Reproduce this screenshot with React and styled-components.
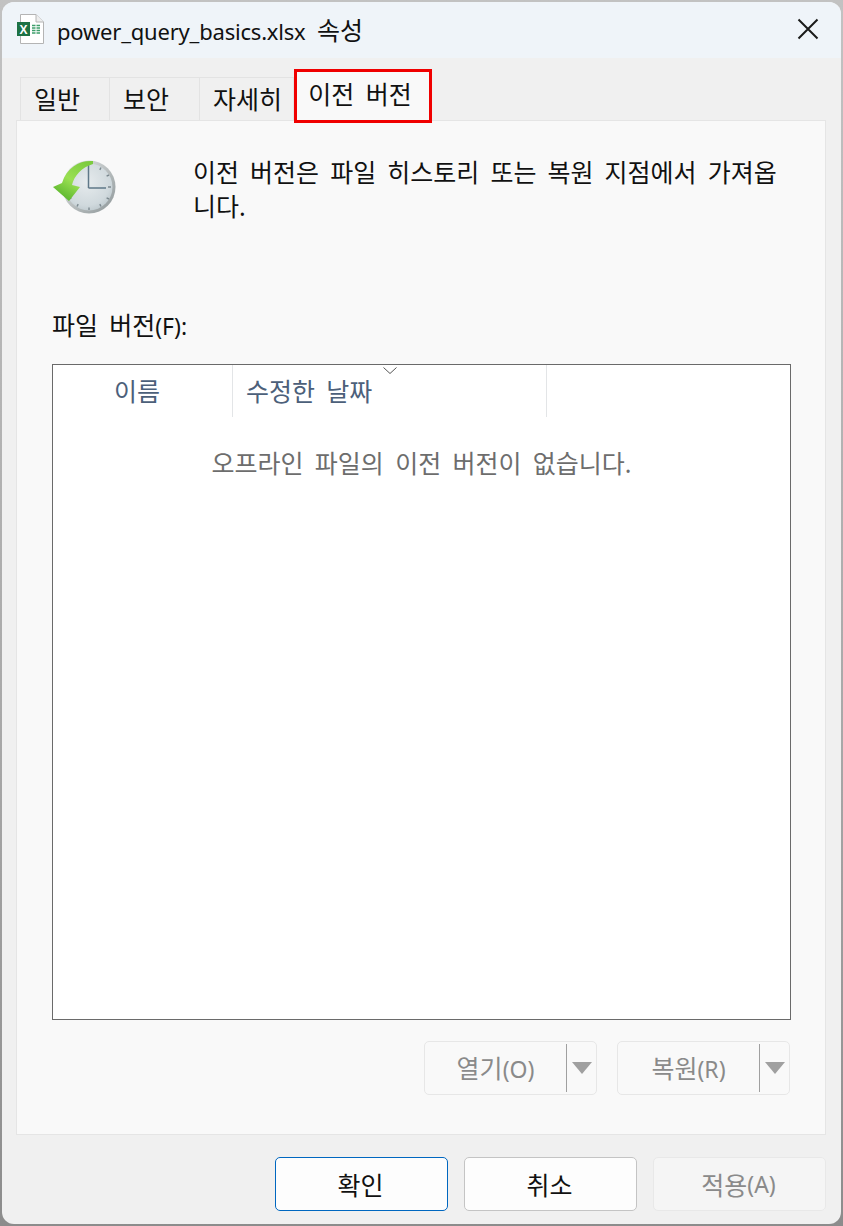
import React from "react";
import styled, { createGlobalStyle } from "styled-components";

const Global = createGlobalStyle`
  html, body { margin: 0; padding: 0; }
  body {
    width: 843px; height: 1226px; overflow: hidden;
    background: linear-gradient(180deg, #c2c2c2 0%, #a8a8a8 60%, #8c8c8c 100%);
    font-family: "Noto Sans", "Noto Sans CJK KR", sans-serif;
  }
  * { box-sizing: border-box; }
`;

const FONT = `"Noto Sans", "Noto Sans CJK KR", sans-serif`;

const Window = styled.div`
  margin: 2px;
  width: 839px;
  height: 1222px;
  border-radius: 12px;
  overflow: hidden;
  background: #f0f0f0;
  display: flex;
  flex-direction: column;
  font-family: ${FONT};
`;
const TitleBar = styled.header`
  height: 56px;
  flex: none;
  background: #eff4f9;
  display: flex;
  align-items: center;
  padding: 0 22px 2px 14px;
`;
const TitleText = styled.div`
  margin-left: 9px;
  font-size: 22px;
  letter-spacing: -0.2px;
  color: #111;
  flex: 1;
  word-spacing: 6px;
`;
const TitleKorean = styled.span`
  font-size: 25px;
  letter-spacing: 0;
`;
const Latin = styled.span`
  font-size: 23px;
`;
const Content = styled.div`
  flex: 1;
  display: flex;
  flex-direction: column;
  padding: 12px 14px 0;
`;
const TabStrip = styled.div`
  height: 53px;
  flex: none;
  display: flex;
  align-items: flex-end;
  padding-left: 4px;
  position: relative;
  z-index: 1;
  margin-bottom: -3px;
`;
const Tab = styled.div`
  width: ${p => p.$w}px;
  height: 43px;
  margin-bottom: 3px;
  background: #f0f0f0;
  border: 1px solid #e3e3e3;
  border-bottom: none;
  border-left-width: ${p => (p.$first ? 1 : 0)}px;
  font-size: 25px;
  color: #111;
  display: flex;
  align-items: center;
  padding-left: 13px;
  padding-bottom: 2px;
`;
const ActiveTab = styled.div`
  width: 138px;
  height: 54px;
  background: #f9f9f9;
  border: 3px solid #f00000;
  font-size: 25px;
  color: #111;
  display: flex;
  align-items: center;
  justify-content: center;
  word-spacing: 5px;
  padding: 0 6px 6px 0;
`;
const Panel = styled.section`
  width: 810px;
  height: 1015px;
  flex: none;
  background: #f9f9f9;
  border: 1px solid #e5e5e5;
  padding: 37px 34px 0 35px;
  display: flex;
  flex-direction: column;
`;
const Intro = styled.div`
  display: flex;
  height: 128px;
  flex: none;
`;
const IntroIcon = styled.div`
  width: 141px;
  flex: none;
`;
const IntroText = styled.p`
  margin: -3px 0 0;
  font-size: 25px;
  line-height: 34px;
  color: #111;
  word-spacing: 4.6px;
  width: 595px;
`;
const FieldLabel = styled.div`
  margin-top: 22px;
  font-size: 25px;
  line-height: 34px;
  color: #111;
  height: 56px;
  word-spacing: 4.7px;
`;
const ListBox = styled.div`
  width: 739px;
  height: 656px;
  flex: none;
  background: #fff;
  border: 1px solid #6a6a6a;
  position: relative;
`;
const HeaderRow = styled.div`
  display: flex;
  height: 52px;
`;
const HeaderCell = styled.div`
  width: ${p => p.$w}px;
  border-right: 1px solid #e3e5e7;
  color: #4c607a;
  font-size: 25px;
  display: flex;
  align-items: center;
  padding-left: ${p => p.$pl}px;
  padding-bottom: 3px;
  word-spacing: 4.7px;
`;
const SortCaret = styled.svg`
  position: absolute;
  left: 330px;
  top: 2px;
`;
const EmptyMessage = styled.div`
  margin-top: 28px;
  text-align: center;
  font-size: 25px;
  line-height: 36px;
  color: #6d6d6d;
  word-spacing: 4.8px;
`;
const ActionRow = styled.div`
  display: flex;
  justify-content: flex-end;
  gap: 20px;
  margin-top: 21px;
  padding-right: 1px;
`;
const SplitButton = styled.div`
  width: 173px;
  height: 54px;
  border: 1px solid #e7e7e7;
  border-radius: 5px;
  background: #f9f9f9;
  display: flex;
  align-items: center;
  color: #8a8a8a;
  font-size: 25px;
`;
const SplitLabel = styled.div`
  width: 141px;
  text-align: center;
  padding-bottom: 2px;
`;
const SplitDivider = styled.div`
  width: 1px;
  height: 48px;
  background: #a0a0a0;
`;
const SplitArrow = styled.svg`
  margin-left: 5px;
`;
const Footer = styled.div`
  display: flex;
  justify-content: flex-end;
  gap: 16px;
  margin-top: 22px;
  width: 810px;
`;
const Button = styled.div`
  width: 173px;
  height: 54px;
  border-radius: 5px;
  border: ${p => (p.$default ? "1.5px solid #0067c0" : p.$disabled ? "1px solid #e8e8e8" : "1px solid #c4c4c4")};
  background: ${p => (p.$disabled ? "#f5f5f5" : "#fdfdfd")};
  color: ${p => (p.$disabled ? "#8a8a8a" : "#111")};
  font-size: 25px;
  display: flex;
  align-items: center;
  justify-content: center;
  padding-right: 2px;
`;
const CloseIcon = styled.svg`
  flex: none;
`;

const ExcelIcon = () => (
  <svg width="32" height="32" viewBox="0 0 32 32">
    <path d="M4.5 1.500H20L27.500 9V30.500H4.500Z" fill="#fff" stroke="#b4b4b4" />
    <path d="M20 1.500V9H27.500" fill="#eee" stroke="#b4b4b4" />
    <path d="M16 12.500h3.500M20.500 12.500h3.500M16 15h3.500M20.500 15h3.500M16 17.500h3.500M20.500 17.500h3.500M16 20h3.500M20.500 20h3.500" stroke="#3e9e6b" strokeWidth="1.500" />
    <rect x="1" y="9" width="13" height="14" fill="#1d7245" />
    <text x="7.500" y="21" textAnchor="middle" fontFamily="Liberation Sans, sans-serif" fontWeight="700" fontSize="12" fill="#fff">X</text>
  </svg>
);

const ClockIcon = () => (
  <svg width="68" height="60" viewBox="0 0 68 60">
    <defs>
      <radialGradient id="face" cx="0.45" cy="0.4" r="0.7">
        <stop offset="0" stopColor="#e6ebed" />
        <stop offset="0.7" stopColor="#d0d9dd" />
        <stop offset="1" stopColor="#b6c2c7" />
      </radialGradient>
      <linearGradient id="rim" x1="0" y1="0" x2="1" y2="1">
        <stop offset="0" stopColor="#e8eaea" />
        <stop offset="1" stopColor="#8d9698" />
      </linearGradient>
      <linearGradient id="arrow" x1="0.8" y1="0" x2="0.2" y2="1">
        <stop offset="0" stopColor="#7ccb3f" />
        <stop offset="0.5" stopColor="#9ae052" />
        <stop offset="1" stopColor="#52b028" />
      </linearGradient>
    </defs>
    <circle cx="37" cy="29" r="26.500" fill="url(#rim)" />
    <circle cx="37" cy="29" r="23.500" fill="url(#face)" />
    <g stroke="#7c898f" strokeWidth="1.400">
      <path d="M49 9.500l-1.200 2.400M57 17l-2.400 1.200M59 29h-3M57 41l-2.400-1.200M49 48.500l-1.200-2.400M37 52v-2.500M25 48.500l1.200-2.400M17 41l2.400-1.200" />
    </g>
    <path d="M36.500 7V30M36.500 30H54" fill="none" stroke="#5f7888" strokeWidth="1.500" />
    <path d="M41 3C28 2 15 9 10 25L1 29L17 43L28 29L20 27C22 18 30 9 41 6Z" fill="url(#arrow)" />
  </svg>
);

export default function App() {
  return (
    <>
      <Global />
      <Window>
        <TitleBar>
          <ExcelIcon />
          <TitleText>power_query_basics.xlsx <TitleKorean>속성</TitleKorean></TitleText>
          <CloseIcon width="22" height="22" viewBox="0 0 22 22">
            <path d="M1.500 1.500L20.500 20.500M20.500 1.500L1.500 20.500" stroke="#1a1a1a" strokeWidth="2" fill="none" />
          </CloseIcon>
        </TitleBar>
        <Content>
          <TabStrip>
            <Tab $w={90} $first>일반</Tab>
            <Tab $w={90}>보안</Tab>
            <Tab $w={94}>자세히</Tab>
            <ActiveTab>이전 버전</ActiveTab>
          </TabStrip>
          <Panel>
            <Intro>
              <IntroIcon><ClockIcon /></IntroIcon>
              <IntroText>이전 버전은 파일 히스토리 또는 복원 지점에서 가져옵니다.</IntroText>
            </Intro>
            <FieldLabel>파일 버전<Latin>(F):</Latin></FieldLabel>
            <ListBox>
              <HeaderRow>
                <HeaderCell $w={180} $pl={61}>이름</HeaderCell>
                <HeaderCell $w={314} $pl={13}>수정한 날짜</HeaderCell>
              </HeaderRow>
              <SortCaret width="14" height="8" viewBox="0 0 14 8">
                <path d="M0.500 0.500L7 6.500L13.500 0.500" fill="none" stroke="#555" strokeWidth="1" />
              </SortCaret>
              <EmptyMessage>오프라인 파일의 이전 버전이 없습니다.</EmptyMessage>
            </ListBox>
            <ActionRow>
              <SplitButton>
                <SplitLabel>열기<Latin>(O)</Latin></SplitLabel>
                <SplitDivider />
                <SplitArrow width="20" height="12" viewBox="0 0 20 12"><path d="M0 0H20L10 12Z" fill="#a0a0a0" /></SplitArrow>
              </SplitButton>
              <SplitButton>
                <SplitLabel>복원<Latin>(R)</Latin></SplitLabel>
                <SplitDivider />
                <SplitArrow width="20" height="12" viewBox="0 0 20 12"><path d="M0 0H20L10 12Z" fill="#a0a0a0" /></SplitArrow>
              </SplitButton>
            </ActionRow>
          </Panel>
          <Footer>
            <Button $default>확인</Button>
            <Button>취소</Button>
            <Button $disabled>적용<Latin>(A)</Latin></Button>
          </Footer>
        </Content>
      </Window>
    </>
  );
}
